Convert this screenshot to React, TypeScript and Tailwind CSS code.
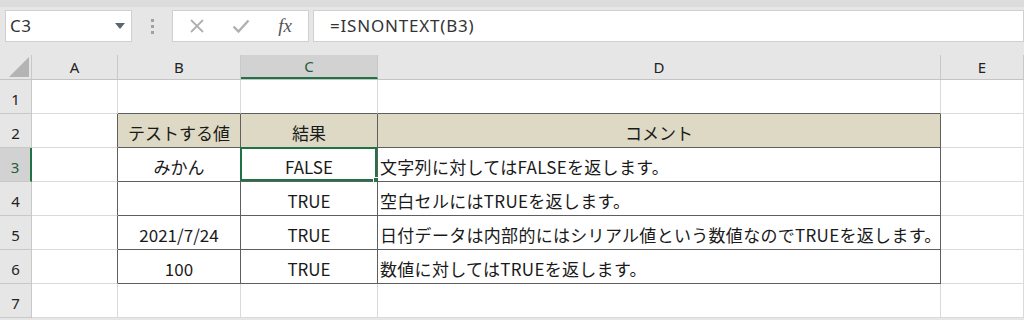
import React from 'react';

const COLS = ['A', 'B', 'C', 'D', 'E'];
const WIDTHS = [86, 123, 137, 563, 83];
const ROW_H = 34;

type Align = 'center' | 'left';

const CELLS: Record<string, { text: string; align: Align; header?: boolean }> = {
  B2: { text: 'テストする値', align: 'center', header: true },
  C2: { text: '結果', align: 'center', header: true },
  D2: { text: 'コメント', align: 'center', header: true },
  B3: { text: 'みかん', align: 'center' },
  C3: { text: 'FALSE', align: 'center' },
  D3: { text: '文字列に対してはFALSEを返します。', align: 'left' },
  C4: { text: 'TRUE', align: 'center' },
  D4: { text: '空白セルにはTRUEを返します。', align: 'left' },
  B5: { text: '2021/7/24', align: 'center' },
  C5: { text: 'TRUE', align: 'center' },
  D5: { text: '日付データは内部的にはシリアル値という数値なのでTRUEを返します。', align: 'left' },
  B6: { text: '100', align: 'center' },
  C6: { text: 'TRUE', align: 'center' },
  D6: { text: '数値に対してはTRUEを返します。', align: 'left' },
};

const inTable = (c: number, r: number) => c >= 1 && c <= 3 && r >= 2 && r <= 6;

const Cell: React.FC<{ c: number; r: number }> = ({ c, r }) => {
  const key = COLS[c] + r;
  const cell = CELLS[key];
  const darkRight = inTable(c, r) || (c === 0 && r >= 2 && r <= 6);
  const darkBottom = c >= 1 && c <= 3 && r >= 1 && r <= 6;
  return (
    <div
      className={`relative flex items-end pb-[6px] border-r border-b box-border ${
        darkRight ? 'border-r-[#5f5f5f]' : 'border-r-[#dadada]'
      } ${darkBottom ? 'border-b-[#5f5f5f]' : 'border-b-[#dadada]'} ${
        cell?.header ? 'bg-[#ddd9c4]' : 'bg-white'
      } ${cell?.align === 'left' ? 'justify-start pl-[2px] tracking-[0.3px]' : 'justify-center'}`}
      style={{ width: WIDTHS[c], height: ROW_H }}
    >
      {cell && (
        <span className="text-[17px] leading-none text-[#1a1a1a] whitespace-nowrap">{cell.text}</span>
      )}
      {key === 'C3' && (
        <div className="absolute -left-[1px] -top-[1px] right-0 bottom-0 border-2 border-[#217346] pointer-events-none">
          <div className="absolute -right-[4px] -bottom-[4px] w-[6px] h-[6px] bg-[#217346] border border-white" />
        </div>
      )}
    </div>
  );
};

export default function App() {
  return (
    <div
      className="w-[1024px] h-[320px] overflow-hidden bg-[#e6e6e6] flex flex-col"
      style={{ fontFamily: '"Noto Sans CJK JP", "Noto Sans", sans-serif' }}
    >
      {/* formula bar */}
      <div className="h-[55px] flex items-start pt-[3px] border-t-[7px] border-t-[#dcdcdc] shrink-0">
        <div className="ml-[5px] w-[127px] h-[32px] bg-white border border-[#d0d0d0] flex items-center justify-between pl-[4px] pr-[6px]">
          <span className="text-[17px] text-[#333] tracking-[0.5px]" style={{ fontFamily: '"Noto Sans", sans-serif' }}>C3</span>
          <svg width="10" height="6" viewBox="0 0 10 6"><path d="M0 0h10L5 6z" fill="#5b6670" /></svg>
        </div>
        <div className="w-[40px] h-[32px] flex flex-col items-center justify-center gap-[3px]">
          <span className="w-[3px] h-[3px] bg-[#a0a0a0]" />
          <span className="w-[3px] h-[3px] bg-[#a0a0a0]" />
          <span className="w-[3px] h-[3px] bg-[#a0a0a0]" />
        </div>
        <div className="w-[137px] h-[32px] bg-white border border-[#d0d0d0] flex items-center">
          <div className="w-[46px] flex justify-center pl-[2px]">
            <svg width="16" height="16" viewBox="0 0 16 16"><path d="M2 2l12 12M14 2L2 14" stroke="#b0b0b0" strokeWidth="1.8" /></svg>
          </div>
          <div className="w-[44px] flex justify-center">
            <svg width="18" height="14" viewBox="0 0 18 14"><path d="M1.5 7.5l5 5L16.5 1.5" stroke="#b0b0b0" strokeWidth="2.4" fill="none" /></svg>
          </div>
          <div className="w-[46px] flex justify-center">
            <span className="italic text-[19px] text-[#555]" style={{ fontFamily: '"Liberation Serif", serif' }}>fx</span>
          </div>
        </div>
        <div className="ml-[4px] flex-1 h-[32px] bg-white border border-[#d0d0d0] flex items-center pl-[16px]">
          <span className="text-[17px] text-[#333] tracking-[0.8px]" style={{ fontFamily: '"Noto Sans", sans-serif' }}>=ISNONTEXT(B3)</span>
        </div>
      </div>

      {/* column headers */}
      <div className="flex h-[24px] shrink-0 border-b border-b-[#c4c4c4] box-content" style={{ fontFamily: '"Noto Sans", sans-serif' }}>
        <div className="w-[32px] h-full border-r border-r-[#c8c8c8] flex items-end justify-end pr-[2px] pb-[2px]">
          <svg width="20" height="20" viewBox="0 0 20 20"><path d="M20 0v20H0z" fill="#b4b4b4" /></svg>
        </div>
        {COLS.map((col, i) => (
          <div
            key={col}
            className={`h-full flex items-center justify-center text-[15px] box-border border-r ${
              col === 'C'
                ? 'bg-[#d2d2d2] text-[#1e5e3a] border-b-2 border-b-[#217346] border-r-[#c8c8c8]'
                : 'text-[#222] border-r-[#c8c8c8]'
            }`}
            style={{ width: WIDTHS[i] }}
          >
            {col}
          </div>
        ))}
      </div>

      {/* rows */}
      <div className="flex flex-col">
        {[1, 2, 3, 4, 5, 6, 7].map((r) => (
          <div key={r} className="flex">
            <div
              className={`w-[32px] h-[34px] box-border border-b border-b-[#c8c8c8] flex items-end justify-center pb-[3px] text-[15px] ${
                r === 3
                  ? 'bg-[#d2d2d2] text-[#1e5e3a] border-r-2 border-r-[#217346]'
                  : 'bg-[#e6e6e6] text-[#222] border-r border-r-[#c8c8c8]'
              }`}
              style={{ fontFamily: '"Noto Sans", sans-serif' }}
            >
              {r}
            </div>
            {COLS.map((_, c) => (
              <Cell key={c} c={c} r={r} />
            ))}
          </div>
        ))}
      </div>
    </div>
  );
}
